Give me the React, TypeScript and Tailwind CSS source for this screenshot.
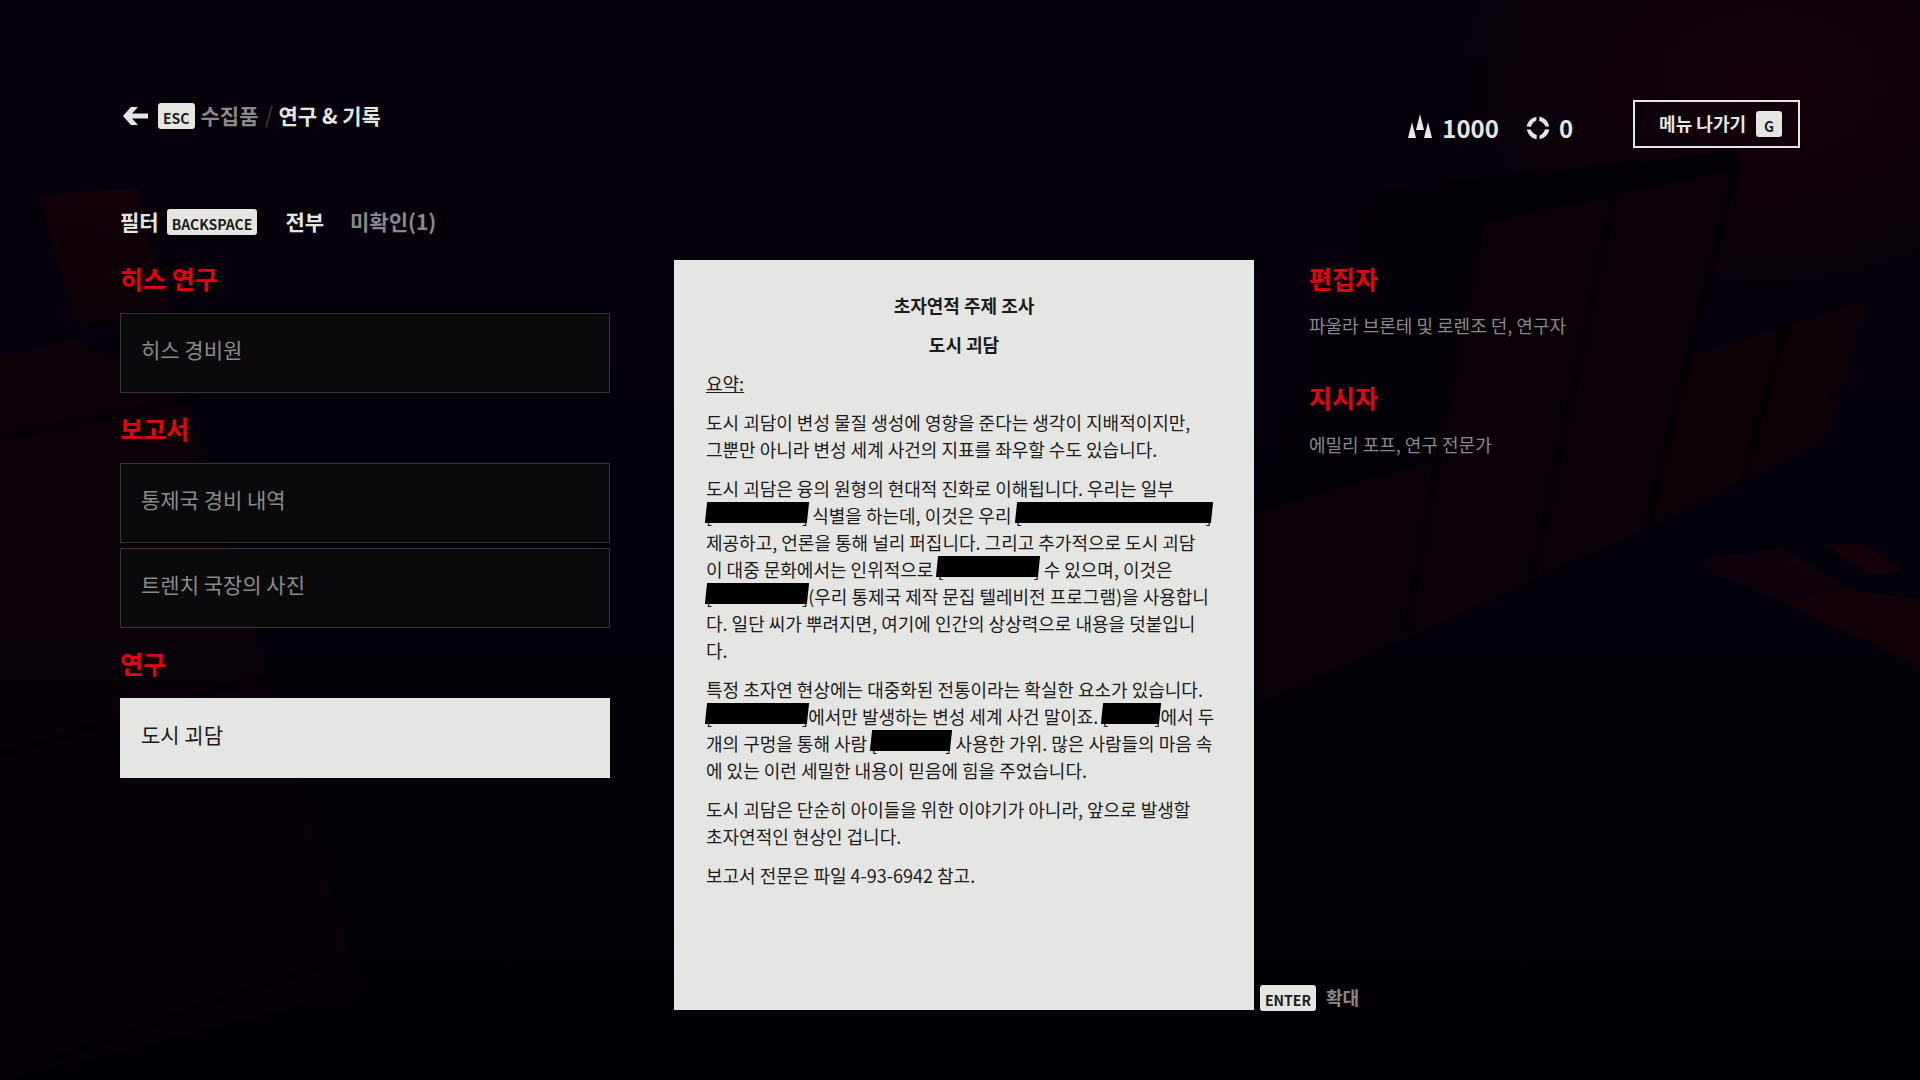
import type { ReactNode } from 'react';
import clsx from 'clsx';

type Section = { title: string; items: string[] };

const sections: Section[] = [
  { title: '히스 연구', items: ['히스 경비원'] },
  { title: '보고서', items: ['통제국 경비 내역', '트렌치 국장의 사진'] },
  { title: '연구', items: ['도시 괴담'] },
];

const credits = [
  { role: '편집자', names: '파울라 브론테 및 로렌조 던, 연구자' },
  { role: '지시자', names: '에밀리 포프, 연구 전문가' },
];

const SELECTED = '도시 괴담';

const Key = ({ children }: { children: ReactNode }) => (
  <kbd className="inline-flex h-[26px] min-w-[26px] items-end justify-center rounded-[3px] bg-[#e5e5e3] px-[5px] font-[inherit] text-[14px] leading-[22px] font-bold text-[#1c1c1c]">
    {children}
  </kbd>
);

// Blacked-out passage, the bracket feet stay visible below the bar
const Redacted = ({ className }: { className: string }) => (
  <span className="relative inline-block whitespace-nowrap">
    [<span className={clsx('inline-block', className)} />]
    <span className="absolute inset-x-0 top-0 h-[21px] -skew-x-6 bg-black" />
  </span>
);

const Backdrop = () => (
  <svg
    className="absolute inset-0 -z-10 size-full"
    viewBox="0 0 1920 1080"
    preserveAspectRatio="none"
    aria-hidden="true"
  >
    <defs>
      <linearGradient id="base" x1="0" y1="0" x2="0" y2="1">
        <stop offset="0" stopColor="#07000a" />
        <stop offset="0.5" stopColor="#04000a" />
        <stop offset="1" stopColor="#020005" />
      </linearGradient>
      <radialGradient id="glow">
        <stop offset="0" stopColor="#12000a" />
        <stop offset="1" stopColor="#12000a" stopOpacity="0" />
      </radialGradient>
      <linearGradient id="wall" x1="0" y1="0" x2="0" y2="1">
        <stop offset="0" stopColor="#0b0007" />
        <stop offset="1" stopColor="#06000a" />
      </linearGradient>
      <linearGradient id="window" x1="0" y1="0" x2="0" y2="1">
        <stop offset="0" stopColor="#120008" />
        <stop offset="1" stopColor="#0a0007" />
      </linearGradient>
    </defs>
    <rect width="1920" height="1080" fill="url(#base)" />
    <ellipse cx="1770" cy="90" rx="330" ry="240" fill="url(#glow)" />

    {/* left wall with the lit window */}
    <path d="M0 357 74 340 187 399 269 678 304 802 360 992 0 1080Z" fill="url(#wall)" />
    <path d="M39 197 137 188 167 310 78 328Z" fill="url(#window)" />
    <path d="M0 437 195 399M0 755 269 675M43 1063 330 962" stroke="#030006" strokeWidth="6" fill="none" />

    {/* lockers */}
    <path d="M1380 190 1740 150 1736 169 1481 224 1433 461 1260 510 1300 400Z" fill="#030008" />
    <path d="M1481 224 1736 169 1643 530 1403 640 1260 703V510L1433 461Z" fill="#0a0007" />
    <path d="M1614 196 1534 572M1481 224 1407 627" stroke="#040006" strokeWidth="7" fill="none" />
    <path d="M1685 358 1866 300 1824 441 1647 527Z" fill="#0c0007" />
    <path d="M1736 169 1647 527M1784 330 1742 485" stroke="#030006" strokeWidth="6" fill="none" />

    {/* loose papers */}
    <path d="M1706 559 1780 548 1870 600 1782 600 1716 575Z" fill="#0e000a" />
    <path d="M1824 544 1862 544 1904 572 1870 574Z" fill="#140009" />
    <path d="M1782 600 1850 590 1920 600V668L1875 644 1826 624Z" fill="#110008" />
  </svg>
);

export default function App() {
  return (
    <div className="relative isolate min-h-screen overflow-hidden bg-[#030008] px-[120px] pt-[100px] pb-[70px] font-['Noto_Sans_CJK_KR',sans-serif] text-[#e5e5e3]">
      <Backdrop />

      <header className="flex h-12 items-start justify-between">
        <nav className="flex h-8 items-center text-[21px] leading-8 font-bold" aria-label="breadcrumb">
          <button type="button" className="flex items-center gap-[10px] pl-[3px]" aria-label="ESC">
            <svg className="h-[18px] w-[25px]" viewBox="0 0 25 18" fill="currentColor" aria-hidden="true">
              <path d="M0 9 8 0H15L9 6.5H25V11.5H9L15 18H8Z" />
            </svg>
            <Key>ESC</Key>
          </button>
          <a href="#collectibles" className="ml-[6px] pb-[2px] text-[#8a8889]">
            수집품
          </a>
          <svg className="mx-[6px] h-[21px] w-[8px] text-[#3c3a3e]" viewBox="0 0 8 21" aria-hidden="true">
            <path d="M7 0 1 21" stroke="currentColor" strokeWidth="1.5" />
          </svg>
          <h1 className="pb-[2px]">연구 &amp; 기록</h1>
        </nav>

        <div className="flex items-start">
          <div className="mr-[60px] flex items-center gap-[27px] pt-[10px] text-[24px] leading-9 font-bold">
            <span className="flex items-center gap-[10px]">
              <svg className="-mt-1 h-6 w-6" viewBox="0 0 24 24" fill="currentColor" aria-hidden="true">
                <path d="M12 0 16 16H8ZM4 8 8 24H0ZM20 8 24 24H16Z" />
              </svg>
              1000
            </span>
            <span className="flex items-center gap-[9px]">
              <svg className="h-6 w-6" viewBox="0 0 24 24" fill="currentColor" aria-hidden="true">
                <path d="M0.5 10.5Q2.6 2.4 10.4 0.8V4.6Q6.4 6.2 5 10.8Z" />
                <path d="M0.5 10.5Q2.6 2.4 10.4 0.8V4.6Q6.4 6.2 5 10.8Z" transform="rotate(90 12 12)" />
                <path d="M0.5 10.5Q2.6 2.4 10.4 0.8V4.6Q6.4 6.2 5 10.8Z" transform="rotate(180 12 12)" />
                <path d="M0.5 10.5Q2.6 2.4 10.4 0.8V4.6Q6.4 6.2 5 10.8Z" transform="rotate(270 12 12)" />
              </svg>
              0
            </span>
          </div>
          <button
            type="button"
            className="flex h-12 items-center gap-[10px] border-2 border-[#e5e5e3] pr-4 pl-6 text-[18px] leading-7 font-bold"
          >
            <span className="pb-[2px]">메뉴 나가기</span>
            <Key>G</Key>
          </button>
        </div>
      </header>

      <div className="mt-[58px] flex h-8 items-center text-[21px] leading-8 font-bold">
        <span className="mr-[8px] pb-[2px]">필터</span>
        <Key>BACKSPACE</Key>
        <button type="button" className="ml-7 pb-[2px]">
          전부
        </button>
        <button type="button" className="ml-[26px] pb-[2px] text-[#8a8889]">
          미확인(1)
        </button>
      </div>

      <main className="mt-[22px] flex items-stretch">
        <aside className="flex w-[490px] shrink-0 flex-col gap-[17px]">
          {sections.map((section) => (
            <section key={section.title}>
              <h2 className="mb-[17px] text-[25px] leading-9 font-bold text-[#e8000f]">{section.title}</h2>
              <ul className="flex flex-col gap-[5px]">
                {section.items.map((item) => (
                  <li key={item}>
                    <button
                      type="button"
                      className={clsx(
                        'flex h-20 w-full items-center border px-5 pb-2 text-left text-[21px] leading-8',
                        item === SELECTED
                          ? 'border-[#e5e5e3] bg-[#e5e5e3] text-[#1c1c1c]'
                          : 'border-[#373638] bg-[#0a0a0c] text-[#8b8a88]'
                      )}
                    >
                      {item}
                    </button>
                  </li>
                ))}
              </ul>
            </section>
          ))}
        </aside>

        <article className="ml-16 flex min-h-[750px] w-[580px] shrink-0 flex-col gap-3 bg-[#e5e5e3] p-8 text-[18px] leading-[27px] text-[#1c1c1c]">
          <h2 className="text-center font-bold">초자연적 주제 조사</h2>
          <h3 className="text-center font-bold">도시 괴담</h3>
          <p>
            <u>요약:</u>
          </p>
          <p>
            도시 괴담이 변성 물질 생성에 영향을 준다는 생각이 지배적이지만,
            <br />
            그뿐만 아니라 변성 세계 사건의 지표를 좌우할 수도 있습니다.
          </p>
          <p>
            도시 괴담은 융의 원형의 현대적 진화로 이해됩니다. 우리는 일부
            <br />
            <Redacted className="w-[90px]" /> 식별을 하는데, 이것은 우리 <Redacted className="w-[184px]" />
            <br />
            제공하고, 언론을 통해 널리 퍼집니다. 그리고 추가적으로 도시 괴담
            <br />이 대중 문화에서는 인위적으로 <Redacted className="w-[90px]" /> 수 있으며, 이것은
            <br />
            <Redacted className="w-[90px]" />
            (우리 통제국 제작 문집 텔레비전 프로그램)을 사용합니
            <br />
            다. 일단 씨가 뿌려지면, 여기에 인간의 상상력으로 내용을 덧붙입니
            <br />
            다.
          </p>
          <p>
            특정 초자연 현상에는 대중화된 전통이라는 확실한 요소가 있습니다.
            <br />
            <Redacted className="w-[90px]" />
            에서만 발생하는 변성 세계 사건 말이죠. <Redacted className="w-[46px]" />
            에서 두
            <br />
            개의 구멍을 통해 사람 <Redacted className="w-[68px]" /> 사용한 가위. 많은 사람들의 마음 속
            <br />에 있는 이런 세밀한 내용이 믿음에 힘을 주었습니다.
          </p>
          <p>
            도시 괴담은 단순히 아이들을 위한 이야기가 아니라, 앞으로 발생할
            <br />
            초자연적인 현상인 겁니다.
          </p>
          <p>보고서 전문은 파일 4-93-6942 참고.</p>
        </article>

        <aside className="flex flex-1 flex-col justify-between">
          <dl className="ml-[55px]">
            {credits.map((credit) => (
              <div key={credit.role} className="mb-[40px]">
                <dt className="mb-[15px] text-[25px] leading-9 font-bold text-[#e8000f]">{credit.role}</dt>
                <dd className="text-[18px] leading-7 text-[#8a8889]">{credit.names}</dd>
              </div>
            ))}
          </dl>
          <button
            type="button"
            className="-mb-[3px] ml-[6px] flex items-center gap-[10px] self-start text-[18px] leading-7 font-bold text-[#8a8889]"
          >
            <Key>ENTER</Key>
            <span className="pb-[2px]">확대</span>
          </button>
        </aside>
      </main>
    </div>
  );
}
